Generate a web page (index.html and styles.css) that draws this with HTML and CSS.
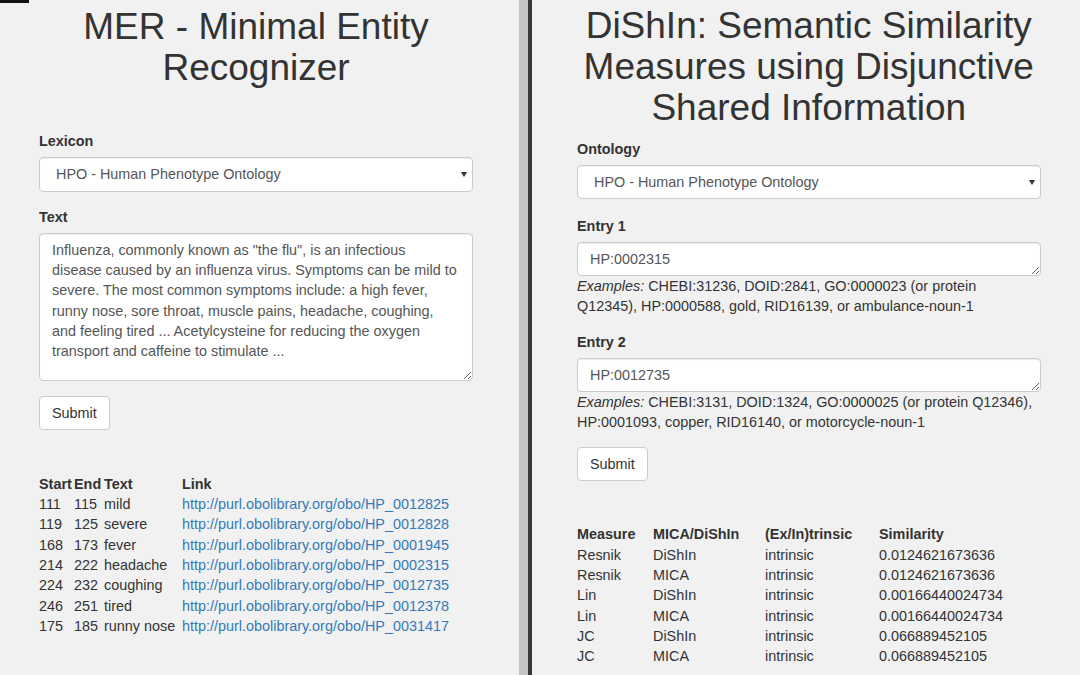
FILE: index.html
```html
<!DOCTYPE html>
<html lang="en">

<head>
    <meta charset="utf-8">
    <meta name="viewport" content="width=device-width, initial-scale=1">
    <title>MER and DiShIn</title>
    <link rel="stylesheet" href="styles.css">
</head>

<body>
    <div class="pane pane-mer">
        <div class="corner"></div>
        <div class="pane-body">
            <h1 class="title">MER - Minimal Entity Recognizer</h1>

            <form>
                <div class="form-group">
                    <label for="lexicon">Lexicon</label>
                    <span class="select-wrap">
                        <select id="lexicon" class="form-control">
                            <option>HPO - Human Phenotype Ontology</option>
                        </select>
                    </span>
                </div>
                <div class="form-group">
                    <label for="text">Text</label>
                    <textarea id="text" class="form-control text-box">Influenza, commonly known as "the flu", is an infectious
disease caused by an influenza virus. Symptoms can be mild to
severe. The most common symptoms include: a high fever,
runny nose, sore throat, muscle pains, headache, coughing,
and feeling tired ... Acetylcysteine for reducing the oxygen
transport and caffeine to stimulate ...</textarea>
                </div>
                <button type="button" class="btn">Submit</button>
            </form>

            <table class="results results-mer">
                <tr>
                    <th class="c-start">Start</th>
                    <th class="c-end">End</th>
                    <th class="c-text">Text</th>
                    <th>Link</th>
                </tr>
                <tr><td>111</td><td>115</td><td>mild</td><td><a href="#">http://purl.obolibrary.org/obo/HP_0012825</a></td></tr>
                <tr><td>119</td><td>125</td><td>severe</td><td><a href="#">http://purl.obolibrary.org/obo/HP_0012828</a></td></tr>
                <tr><td>168</td><td>173</td><td>fever</td><td><a href="#">http://purl.obolibrary.org/obo/HP_0001945</a></td></tr>
                <tr><td>214</td><td>222</td><td>headache</td><td><a href="#">http://purl.obolibrary.org/obo/HP_0002315</a></td></tr>
                <tr><td>224</td><td>232</td><td>coughing</td><td><a href="#">http://purl.obolibrary.org/obo/HP_0012735</a></td></tr>
                <tr><td>246</td><td>251</td><td>tired</td><td><a href="#">http://purl.obolibrary.org/obo/HP_0012378</a></td></tr>
                <tr><td>175</td><td>185</td><td>runny nose</td><td><a href="#">http://purl.obolibrary.org/obo/HP_0031417</a></td></tr>
            </table>
        </div>
    </div>

    <div class="split"></div>

    <div class="pane pane-dishin">
        <div class="pane-body">
            <h1 class="title">DiShIn: Semantic Similarity Measures using Disjunctive Shared Information</h1>

            <form>
                <div class="form-group">
                    <label for="ontology">Ontology</label>
                    <span class="select-wrap">
                        <select id="ontology" class="form-control">
                            <option>HPO - Human Phenotype Ontology</option>
                        </select>
                    </span>
                </div>
                <div class="entry">
                    <label for="entry1">Entry 1</label>
                    <textarea id="entry1" class="form-control entry-box" rows="1">HP:0002315</textarea>
                    <p class="help"><em>Examples:</em> CHEBI:31236, DOID:2841, GO:0000023 (or protein<br>Q12345), HP:0000588, gold, RID16139, or ambulance-noun-1</p>
                </div>
                <div class="entry">
                    <label for="entry2">Entry 2</label>
                    <textarea id="entry2" class="form-control entry-box" rows="1">HP:0012735</textarea>
                    <p class="help"><em>Examples:</em> CHEBI:3131, DOID:1324, GO:0000025 (or protein Q12346),<br>HP:0001093, copper, RID16140, or motorcycle-noun-1</p>
                </div>
                <button type="button" class="btn">Submit</button>
            </form>

            <table class="results results-dishin">
                <tr>
                    <th class="c-measure">Measure</th>
                    <th class="c-mica">MICA/DiShIn</th>
                    <th class="c-trin">(Ex/In)trinsic</th>
                    <th>Similarity</th>
                </tr>
                <tr><td>Resnik</td><td>DiShIn</td><td>intrinsic</td><td>0.0124621673636</td></tr>
                <tr><td>Resnik</td><td>MICA</td><td>intrinsic</td><td>0.0124621673636</td></tr>
                <tr><td>Lin</td><td>DiShIn</td><td>intrinsic</td><td>0.00166440024734</td></tr>
                <tr><td>Lin</td><td>MICA</td><td>intrinsic</td><td>0.00166440024734</td></tr>
                <tr><td>JC</td><td>DiShIn</td><td>intrinsic</td><td>0.066889452105</td></tr>
                <tr><td>JC</td><td>MICA</td><td>intrinsic</td><td>0.066889452105</td></tr>
            </table>
        </div>
    </div>
</body>

</html>
```

FILE: styles.css
```css
body {
    margin: 0;
    padding: 0;
    display: flex;
    height: 675px;
    overflow: hidden;
    background-color: #f1f1f1;
    color: #333;
    font-family: "Liberation Sans", Arial, sans-serif;
    font-size: 14.4px;
    line-height: 20.3px;
}

.pane {
    background-color: #f1f1f1;
    height: 675px;
    overflow: hidden;
}

.pane-mer {
    width: 519px;
    flex-shrink: 0;
}

.pane-mer .pane-body {
    padding: 0 46px 0 39px;
}

.pane-dishin {
    flex: 1;
}

.pane-dishin .pane-body {
    padding: 0 39.5px 0 45px;
}

.corner {
    width: 29px;
    height: 3px;
    background-color: #111;
}

.split {
    width: 9px;
    flex-shrink: 0;
    background-color: #c3c3c3;
    border-right: 4px solid #383838;
}

.title {
    margin: 0;
    font-size: 37px;
    line-height: 41px;
    font-weight: normal;
    text-align: center;
    color: #333;
}

.pane-mer .title {
    margin: 3px 0 43.4px;
}

.pane-dishin .title {
    margin: 5.4px 0 10.5px;
}

form {
    margin: 0;
}

label {
    display: block;
    font-weight: bold;
    margin-bottom: 5.2px;
}

.form-group {
    margin-bottom: 15.5px;
}

.pane-dishin label {
    margin-bottom: 5.7px;
}

.pane-dishin .form-group {
    margin-bottom: 16.5px;
}

.form-control {
    display: block;
    width: 100%;
    box-sizing: border-box;
    margin: 0;
    background-color: #fff;
    border: 1px solid #ccc;
    border-radius: 4px;
    box-shadow: inset 0 1px 1px rgba(0, 0, 0, 0.075);
    color: #555;
    font-family: inherit;
    font-size: 14.4px;
    line-height: 20.3px;
}

.select-wrap {
    display: block;
    position: relative;
}

.select-wrap::after {
    content: "";
    position: absolute;
    right: 6px;
    top: 15px;
    border-left: 3.5px solid transparent;
    border-right: 3.5px solid transparent;
    border-top: 5px solid #333;
}

select.form-control {
    height: 35px;
    padding: 0 24px 0 16px;
    appearance: none;
    -webkit-appearance: none;
}

.pane-dishin select.form-control {
    height: 34.5px;
}

.text-box {
    height: 148px;
    padding: 6px 6px 6px 12px;
}

.entry-box {
    height: 34px;
    padding: 6px 12px;
    overflow: hidden;
}

.help {
    margin: 0 0 15.3px;
    line-height: 20.2px;
}

.btn {
    display: block;
    height: 34px;
    padding: 0 12px;
    background-color: #fff;
    border: 1px solid #ccc;
    border-radius: 4px;
    color: #333;
    font-family: inherit;
    font-size: 14.4px;
    cursor: pointer;
}

.pane-dishin .btn {
    margin-top: 1px;
}

.results {
    border-collapse: collapse;
    border-spacing: 0;
}

.results th,
.results td {
    padding: 0;
    text-align: left;
    vertical-align: top;
    line-height: 20.3px;
}

.results-mer {
    margin-top: 43.5px;
}

.results-dishin {
    margin-top: 43.2px;
}

.c-start {
    width: 35px;
}

.c-end {
    width: 30px;
}

.c-text {
    width: 78px;
}

.c-measure {
    width: 76px;
}

.c-mica {
    width: 112px;
}

.c-trin {
    width: 114px;
}

a {
    color: #337ab7;
    text-decoration: none;
}
```
